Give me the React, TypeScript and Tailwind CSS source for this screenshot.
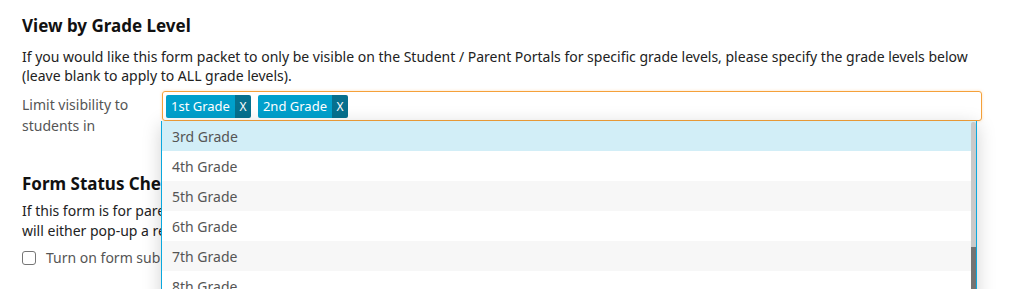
const grades = ["3rd Grade", "4th Grade", "5th Grade", "6th Grade", "7th Grade", "8th Grade", "9th Grade", "10th Grade"];

function Tag({ label }: { label: string }) {
  return (
    <span className="flex h-[23px] items-stretch overflow-hidden rounded-[2px] text-[13px] leading-[23px] text-white">
      <span className="bg-[#00a0cc] px-[5px]">{label}</span>
      <span className="w-[16px] bg-[#06708e] text-center text-[12px]">X</span>
    </span>
  );
}

export default function App() {
  return (
    <div className="relative h-[289px] overflow-hidden bg-white pl-[22px] pr-[29px] pt-[14px] text-[#222]" style={{ fontFamily: '"Noto Sans", sans-serif' }}>
      <h2 className="text-[17px] font-bold leading-[24px] text-[#111]">View by Grade Level</h2>
      <p className="mt-[9px] text-[14px] leading-[19px]">
        If you would like this form packet to only be visible on the Student / Parent Portals for specific grade levels, please specify the grade levels below (leave blank to apply to ALL grade levels).
      </p>
      <div className="mt-[6px] flex">
        <div className="w-[140px] pt-[3px] text-[14px] leading-[21px] text-[#555]">
          Limit visibility to
          <br />
          students in
        </div>
        <div className="relative flex-1">
          <div className="flex h-[30px] items-center gap-[7px] rounded-[3px] border border-[#f5a13a] px-[3px] shadow-[0_0_3px_rgba(245,161,58,0.35)]">
            <Tag label="1st Grade" />
            <Tag label="2nd Grade" />
          </div>
          <div className="absolute left-[-1px] right-[5px] top-[30px] z-10 h-[200px] overflow-hidden border-x border-[#0aa8de] bg-white shadow-[0_4px_18px_rgba(0,0,0,0.18)]">
            {grades.map((g, i) => (
              <div
                key={g}
                className={
                  "h-[30px] pl-[10px] text-[14px] leading-[31px] text-[#555] " +
                  (i === 0 ? "bg-[#d2eef7]" : i % 2 === 0 ? "bg-[#f7f7f7]" : "bg-white")
                }
              >
                {g}
              </div>
            ))}
            <div className="absolute right-0 top-[1px] flex h-full w-[5px] flex-col">
              <div className="h-[125px] rounded-t-[2px] bg-[#c9c9c9]" />
              <div className="flex-1 bg-[#737373]" />
            </div>
          </div>
        </div>
      </div>
      <h2 className="mt-[36px] text-[17px] font-bold leading-[24px] text-[#111]">Form Status Check</h2>
      <p className="mt-[5px] whitespace-nowrap text-[14px] leading-[20px]">
        If this form is for parents to complete, you can turn on form submission status checking. When a parent logs in to the portal, the system then
        <br />
        will either pop-up a reminder message or block access to the portal until the form has been submitted.
      </p>
      <label className="mt-[7px] flex items-center gap-[10px] text-[14px] leading-[20px] text-[#555]">
        <span className="h-[14px] w-[14px] rounded-[3px] border border-[#767676] bg-white" />
        Turn on form submission status checking
      </label>
    </div>
  );
}
